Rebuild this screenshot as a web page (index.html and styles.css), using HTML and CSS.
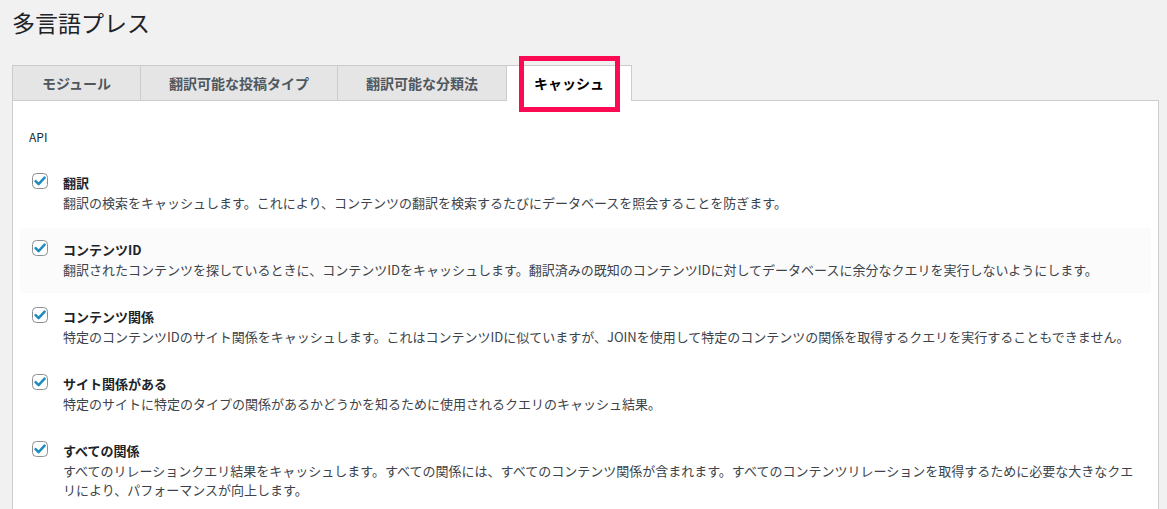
FILE: index.html
```html
<!DOCTYPE html>
<html lang="ja">
<head>
<meta charset="utf-8">
<title>多言語プレス</title>
<link rel="stylesheet" href="styles.css">
</head>
<body>
<div class="wrap">
  <h1 class="page-title">多言語プレス</h1>
  <nav class="tabs">
    <a class="tab tab-first">モジュール</a>
    <a class="tab">翻訳可能な投稿タイプ</a>
    <a class="tab">翻訳可能な分類法</a>
    <a class="tab tab-active">キャッシュ<span class="highlight"></span></a>
  </nav>
  <section class="panel">
    <h2 class="group-title">API</h2>
    <ul class="options">
      <li class="option">
        <span class="check"><svg width="16" height="16" viewBox="0 0 16 16"><rect x="0.5" y="0.5" width="15" height="15" rx="4" fill="#fff" stroke="#8c8f94"/><path d="M3.6 8.2 L6.6 11.2 L12.6 4.6" fill="none" stroke="#1e8cbe" stroke-width="2.5" stroke-linecap="round" stroke-linejoin="round"/></svg></span>
        <div class="option-text">
          <div class="option-label">翻訳</div>
          <div class="option-desc">翻訳の検索をキャッシュします。これにより、コンテンツの翻訳を検索するたびにデータベースを照会することを防ぎます。</div>
        </div>
      </li>
      <li class="option option-alt">
        <span class="check"><svg width="16" height="16" viewBox="0 0 16 16"><rect x="0.5" y="0.5" width="15" height="15" rx="4" fill="#fff" stroke="#8c8f94"/><path d="M3.6 8.2 L6.6 11.2 L12.6 4.6" fill="none" stroke="#1e8cbe" stroke-width="2.5" stroke-linecap="round" stroke-linejoin="round"/></svg></span>
        <div class="option-text">
          <div class="option-label">コンテンツID</div>
          <div class="option-desc">翻訳されたコンテンツを探しているときに、コンテンツIDをキャッシュします。翻訳済みの既知のコンテンツIDに対してデータベースに余分なクエリを実行しないようにします。</div>
        </div>
      </li>
      <li class="option">
        <span class="check"><svg width="16" height="16" viewBox="0 0 16 16"><rect x="0.5" y="0.5" width="15" height="15" rx="4" fill="#fff" stroke="#8c8f94"/><path d="M3.6 8.2 L6.6 11.2 L12.6 4.6" fill="none" stroke="#1e8cbe" stroke-width="2.5" stroke-linecap="round" stroke-linejoin="round"/></svg></span>
        <div class="option-text">
          <div class="option-label">コンテンツ関係</div>
          <div class="option-desc">特定のコンテンツIDのサイト関係をキャッシュします。これはコンテンツIDに似ていますが、JOINを使用して特定のコンテンツの関係を取得するクエリを実行することもできません。</div>
        </div>
      </li>
      <li class="option">
        <span class="check"><svg width="16" height="16" viewBox="0 0 16 16"><rect x="0.5" y="0.5" width="15" height="15" rx="4" fill="#fff" stroke="#8c8f94"/><path d="M3.6 8.2 L6.6 11.2 L12.6 4.6" fill="none" stroke="#1e8cbe" stroke-width="2.5" stroke-linecap="round" stroke-linejoin="round"/></svg></span>
        <div class="option-text">
          <div class="option-label">サイト関係がある</div>
          <div class="option-desc">特定のサイトに特定のタイプの関係があるかどうかを知るために使用されるクエリのキャッシュ結果。</div>
        </div>
      </li>
      <li class="option">
        <span class="check"><svg width="16" height="16" viewBox="0 0 16 16"><rect x="0.5" y="0.5" width="15" height="15" rx="4" fill="#fff" stroke="#8c8f94"/><path d="M3.6 8.2 L6.6 11.2 L12.6 4.6" fill="none" stroke="#1e8cbe" stroke-width="2.5" stroke-linecap="round" stroke-linejoin="round"/></svg></span>
        <div class="option-text">
          <div class="option-label">すべての関係</div>
          <div class="option-desc">すべてのリレーションクエリ結果をキャッシュします。すべての関係には、すべてのコンテンツ関係が含まれます。すべてのコンテンツリレーションを取得するために必要な大きなクエリにより、パフォーマンスが向上します。</div>
        </div>
      </li>
    </ul>
  </section>
</div>
</body>
</html>
```

FILE: styles.css
```css
* { box-sizing: border-box; }

html, body {
  margin: 0;
  padding: 0;
  background: #f1f1f1;
  height: 100%;
  overflow: hidden;
}

body {
  font-family: "Noto Sans CJK JP", "Noto Sans", sans-serif;
  color: #3c434a;
  font-size: 13px;
}

.wrap {
  padding: 8px 8px 0 12px;
}

.page-title {
  margin: 0;
  font-size: 23px;
  line-height: 29px;
  font-weight: 400;
  color: #1d2327;
}

.tabs {
  display: flex;
  align-items: flex-start;
  margin-top: 28px;
  position: relative;
  z-index: 1;
}

.tab {
  display: block;
  height: 35px;
  line-height: 34px;
  padding: 0 28px;
  background: #e5e5e5;
  border-top: 1px solid #ccc;
  border-left: 1px solid #ccc;
  font-size: 14px;
  font-weight: 700;
  color: #50575e;
  white-space: nowrap;
}

.tab-first {
  padding: 0 29px;
}

.tab-active {
  position: relative;
  height: 36px;
  margin-bottom: -1px;
  background: #fff;
  color: #000;
  border-right: 1px solid #ccc;
  padding: 0 27px;
}

.highlight {
  position: absolute;
  left: 12px;
  top: -10px;
  width: 101px;
  height: 56px;
  border: 5px solid #fc0a54;
}

.panel {
  background: #fff;
  border: 1px solid #ccc;
  padding: 27px 7px 40px 16px;
  min-height: 420px;
}

.group-title {
  margin: 0;
  font-size: 12px;
  line-height: 18px;
  font-weight: 400;
  color: #23282d;
}

.options {
  list-style: none;
  margin: 15px 0 0 -9px;
  padding: 0;
  display: flex;
  flex-direction: column;
  gap: 2px;
}

.option {
  display: flex;
  align-items: flex-start;
  padding: 12px 12px 14px 12px;
}

.option-alt {
  background: #fbfbfb;
}

.check {
  flex: 0 0 16px;
  width: 16px;
  height: 16px;
  display: block;
}

.check svg { display: block; }

.option-text {
  margin-left: 15px;
  flex: 1;
  line-height: 19.5px;
}

.option-label {
  font-weight: 700;
  color: #1d2327;
}

.option-desc {
  color: #3c434a;
}
```
